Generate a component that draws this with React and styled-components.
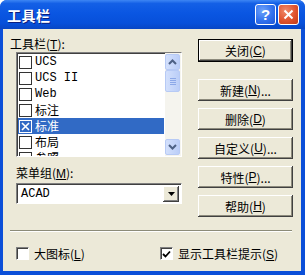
import React from 'react';
import styled, { createGlobalStyle } from 'styled-components';

const cream = "#ECE9D8";
const xpBlue = "#0B4FD8";

const GlobalStyle = createGlobalStyle`
  html, body {
    margin: 0;
    padding: 0;
    background: #ffffff;
  }
  body {
    font-family: "Noto Sans CJK SC", "Liberation Sans", sans-serif;
    font-size: 12px;
    color: #000;
  }
`;

const Window = styled.div`
  width: 305px;
  height: 275px;
  display: flex;
  flex-direction: column;
  background: ${xpBlue};
  border-radius: 7px 7px 0 0;
  overflow: hidden;
`;

const TitleBar = styled.div`
  height: 29px;
  flex: none;
  display: flex;
  align-items: center;
  gap: 2px;
  padding: 0 6px 0 7px;
  background: linear-gradient(to bottom, #3D86F4 0%, #1460E6 12%, #0A56E2 45%, #0750DA 80%, #0846C4 100%);
`;

const Title = styled.div`
  flex: 1;
  color: #fff;
  font-weight: bold;
  font-size: 14px;
  letter-spacing: 0.5px;
  text-shadow: 1px 1px #0A1E80;
`;

const CaptionButton = styled.div`
  width: 19px;
  height: 19px;
  border: 1px solid #fff;
  border-radius: 3px;
  display: flex;
  align-items: center;
  justify-content: center;
  color: #fff;
  font-family: "Liberation Sans", sans-serif;
  font-weight: bold;
  font-size: 15px;
  background: ${p => p.$close
    ? "radial-gradient(circle at 35% 30%, #F08A6A 0%, #E0532E 55%, #C23B17 100%)"
    : "radial-gradient(circle at 35% 30%, #6FA3FA 0%, #3272EE 55%, #1D55D6 100%)"};
`;

const Body = styled.div`
  flex: 1;
  margin: 0 4px 4px 3px;
  background: ${cream};
  display: flex;
  flex-direction: column;
`;

const Main = styled.div`
  display: flex;
  align-items: flex-start;
  padding: 8px 0 0 7px;
`;

const LeftCol = styled.div`
  width: 172px;
  display: flex;
  flex-direction: column;
`;

const Label = styled.div`
  height: 14px;
  line-height: 14px;
  margin-left: ${p => p.$indent || 0}px;
  margin-top: ${p => p.$top || 0}px;
  white-space: nowrap;
`;

const Key = styled.span`
  text-decoration: underline;
  font-family: "Liberation Sans", sans-serif;
`;

const ListBox = styled.div`
  margin: 1px 0 0 6px;
  width: 166px;
  height: 105px;
  box-sizing: border-box;
  border: 1px solid;
  border-color: #808080 #fff #fff #808080;
  box-shadow: inset 1px 1px #404040;
  background: #fff;
  display: flex;
  overflow: hidden;
`;

const Rows = styled.div`
  flex: 1;
  padding: 1px 1px 0 1px;
  display: flex;
  flex-direction: column;
  overflow: hidden;
`;

const Row = styled.div`
  height: 16px;
  flex: none;
  display: flex;
  align-items: center;
  gap: 3px;
  padding-left: 1px;
  background: ${p => p.$selected ? "#316AC5" : "transparent"};
  color: ${p => p.$selected ? "#fff" : "#000"};
`;

const RowText = styled.span`
  font-family: ${p => p.$latin ? '"Liberation Mono", monospace' : '"Noto Sans CJK SC", sans-serif'};
  font-size: 12px;
  line-height: 16px;
`;

const ListCheck = styled.div`
  width: 13px;
  height: 13px;
  box-sizing: border-box;
  border: 1px solid ${p => p.$inverse ? "#fff" : "#333"};
  display: flex;
  align-items: center;
  justify-content: center;
`;

const Scrollbar = styled.div`
  width: 16px;
  background: #F5F4EE;
  display: flex;
  flex-direction: column;
  padding-top: 1px;
`;

const ScrollButton = styled.div`
  width: 15px;
  height: 16px;
  box-sizing: border-box;
  border: 1px solid #B7CAF5;
  border-radius: 2px;
  background: linear-gradient(to right, #D3E0FC, #BBCEF8);
  display: flex;
  align-items: center;
  justify-content: center;
  margin-top: ${p => p.$auto ? "auto" : "0"};
  margin-bottom: ${p => p.$auto ? "1px" : "0"};
`;

const Thumb = styled(ScrollButton)`
  height: 22px;
  flex-direction: column;
  gap: 1px;
`;

const Grip = styled.div`
  width: 6px;
  height: 1px;
  background: #8CA8E8;
`;

const Combo = styled.div`
  margin: 3px 0 0 6px;
  width: 166px;
  height: 21px;
  box-sizing: border-box;
  border: 1px solid;
  border-color: #808080 #fff #fff #808080;
  box-shadow: inset 1px 1px #404040;
  background: #fff;
  display: flex;
  align-items: center;
  padding: 2px 2px 2px 4px;
`;

const ComboText = styled.div`
  flex: 1;
  font-family: "Liberation Mono", monospace;
  font-size: 12px;
`;

const DropButton = styled.div`
  width: 16px;
  height: 16px;
  box-sizing: border-box;
  background: ${cream};
  box-shadow: inset -1px -1px #404040, inset 1px 1px #fff, inset -2px -2px #808080;
  display: flex;
  align-items: center;
  justify-content: center;
`;

const RightCol = styled.div`
  margin-left: 16px;
  width: 95px;
  display: flex;
  flex-direction: column;
  gap: 7px;
  padding-top: 2px;
`;

const Button = styled.div`
  height: ${p => p.$default ? 23 : 22}px;
  margin-bottom: ${p => p.$default ? 10 : 0}px;
  box-sizing: border-box;
  display: flex;
  align-items: center;
  justify-content: center;
  background: ${cream};
  border: ${p => p.$default ? "1px solid #000" : "none"};
  box-shadow: inset -1px -1px #404040, inset 1px 1px #fff, inset -2px -2px #8C8A7C;
  white-space: nowrap;
  font-size: 12px;
`;

const Separator = styled.div`
  margin: 13px 9px 0 7px;
  height: 1px;
  background: #8C8B78;
  border-bottom: 1px solid #fff;
`;

const BottomRow = styled.div`
  display: flex;
  align-items: center;
  padding: 13px 0 0 13px;
`;

const Option = styled.label`
  display: flex;
  align-items: center;
  gap: 5px;
  width: ${p => p.$width || "auto"};
  white-space: nowrap;
`;

const Box = styled.div`
  width: 13px;
  height: 13px;
  box-sizing: border-box;
  background: #fff;
  border: 1px solid;
  border-color: #808080 #fff #fff #808080;
  box-shadow: inset 1px 1px #404040;
  display: flex;
  align-items: center;
  justify-content: center;
`;

const toolbars = [
  { name: "UCS", latin: true },
  { name: "UCS II", latin: true },
  { name: "Web", latin: true },
  { name: "标注" },
  { name: "标准", selected: true },
  { name: "布局" },
  { name: "参照" },
];

function Cross({ color }) {
  return (
    <svg width="9" height="9" viewBox="0 0 9 9">
      <path d="M1 1L8 8M8 1L1 8" stroke={color} strokeWidth="1.6" />
    </svg>
  );
}

function Arrow({ up }) {
  return (
    <svg width="9" height="6" viewBox="0 0 9 6">
      <path d={up ? "M1 5L4.5 1.5L8 5" : "M1 1L4.5 4.5L8 1"} stroke="#4D6185" strokeWidth="2" fill="none" />
    </svg>
  );
}

function App() {
  return (
    <Window>
      <GlobalStyle />
      <TitleBar>
        <Title>工具栏</Title>
        <CaptionButton>?</CaptionButton>
        <CaptionButton $close>
          <svg width="11" height="11" viewBox="0 0 11 11">
            <path d="M1.5 1.5L9.5 9.5M9.5 1.5L1.5 9.5" stroke="#fff" strokeWidth="2" />
          </svg>
        </CaptionButton>
      </TitleBar>
      <Body>
        <Main>
          <LeftCol>
            <Label>工具栏(<Key>T</Key>):</Label>
            <ListBox>
              <Rows>
                {toolbars.map(t => (
                  <Row key={t.name} $selected={t.selected}>
                    <ListCheck $inverse={t.selected}>
                      {t.selected && <Cross color="#fff" />}
                    </ListCheck>
                    <RowText $latin={t.latin}>{t.name}</RowText>
                  </Row>
                ))}
              </Rows>
              <Scrollbar>
                <ScrollButton><Arrow up /></ScrollButton>
                <Thumb><Grip /><Grip /><Grip /><Grip /></Thumb>
                <ScrollButton $auto><Arrow /></ScrollButton>
              </Scrollbar>
            </ListBox>
            <Label $indent={6} $top={9}>菜单组(<Key>M</Key>):</Label>
            <Combo>
              <ComboText>ACAD</ComboText>
              <DropButton>
                <svg width="7" height="4" viewBox="0 0 7 4">
                  <path d="M0 0H7L3.5 4Z" fill="#000" />
                </svg>
              </DropButton>
            </Combo>
          </LeftCol>
          <RightCol>
            <Button $default>关闭(<Key>C</Key>)</Button>
            <Button>新建(<Key>N</Key>)...</Button>
            <Button>删除(<Key>D</Key>)</Button>
            <Button>自定义(<Key>U</Key>)...</Button>
            <Button>特性(<Key>P</Key>)...</Button>
            <Button>帮助(<Key>H</Key>)</Button>
          </RightCol>
        </Main>
        <Separator />
        <BottomRow>
          <Option $width="144px">
            <Box />
            <span>大图标(<Key>L</Key>)</span>
          </Option>
          <Option>
            <Box>
              <svg width="9" height="8" viewBox="0 0 9 8">
                <path d="M1 4L3.5 6.5L8 1.5" stroke="#000" strokeWidth="1.8" fill="none" />
              </svg>
            </Box>
            <span>显示工具栏提示(<Key>S</Key>)</span>
          </Option>
        </BottomRow>
      </Body>
    </Window>
  );
}

export default App;
